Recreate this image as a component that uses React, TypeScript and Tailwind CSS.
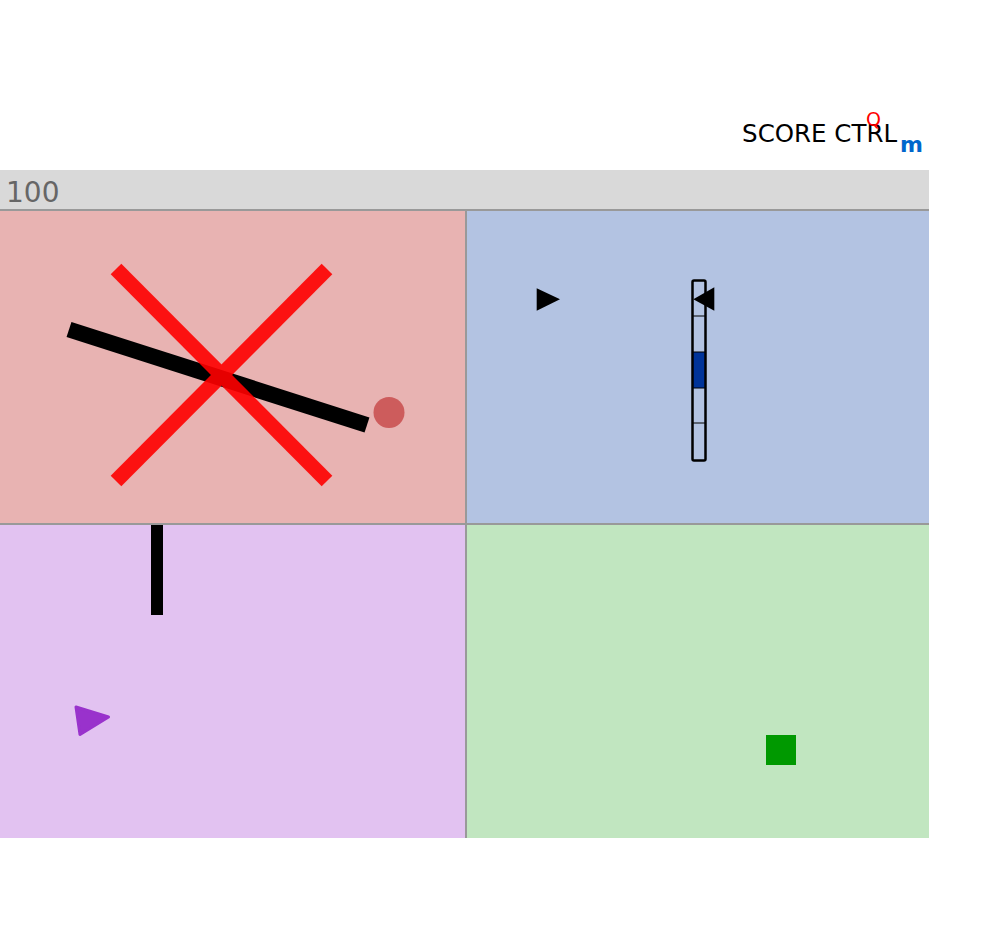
import React from 'react'

const FONT = { fontFamily: '"DejaVu Sans", Verdana, sans-serif' }

// ─── Quadrant canvases ───────────────────────────────────────────
function CrossPanel() {
  return (
    <div className="relative bg-[#e8b3b2] overflow-hidden">
      <svg className="absolute inset-0" width="465" height="312" viewBox="0 0 465 312">
        <line x1="69" y1="118.5" x2="367" y2="214" stroke="#000" strokeWidth="16" />
        <g opacity="0.9">
          <line x1="116" y1="58" x2="327" y2="270" stroke="#ff0000" strokeWidth="15" />
          <line x1="327" y1="58" x2="116" y2="270" stroke="#ff0000" strokeWidth="15" />
        </g>
        <circle cx="389" cy="201.5" r="15.5" fill="#cd5c5c" />
      </svg>
    </div>
  )
}

function SliderPanel() {
  const ticks = [105, 141, 177, 212]
  return (
    <div className="relative bg-[#b3c3e2] overflow-hidden">
      <svg className="absolute inset-0" width="462" height="312" viewBox="0 0 462 312">
        <polygon points="69.7,77.3 93,88.3 69.7,99.7" fill="#000" />
        <rect x="226" y="141" width="12" height="36" fill="#003399" />
        {ticks.map(y => (
          <line key={y} x1="226" y1={y} x2="238" y2={y} stroke="#000" strokeWidth="1" />
        ))}
        <rect x="225.5" y="69.5" width="13" height="180" rx="1.5" fill="none" stroke="#000" strokeWidth="2.5" />
        <polygon points="226.3,88.3 247.3,76.3 247.3,99.7" fill="#000" />
      </svg>
    </div>
  )
}

function ArrowPanel() {
  return (
    <div className="relative bg-[#e2c2f1] overflow-hidden">
      <svg className="absolute inset-0" width="465" height="313" viewBox="0 0 465 313">
        <rect x="151" y="0" width="12" height="90" fill="#000" />
        <polygon
          points="76,182 108.5,192 80,209.5"
          fill="#9932cc"
          stroke="#9932cc"
          strokeWidth="3"
          strokeLinejoin="round"
        />
      </svg>
    </div>
  )
}

function BoxPanel() {
  return (
    <div className="relative bg-[#c1e6c0] overflow-hidden">
      <svg className="absolute inset-0" width="462" height="313" viewBox="0 0 462 313">
        <rect x="299" y="210" width="30" height="30" fill="#009900" />
      </svg>
    </div>
  )
}

export default function App() {
  return (
    <div className="w-[929px] bg-white" style={FONT}>
      {/* Header */}
      <div className="h-[170px] flex justify-end items-baseline pt-[122px] pr-[6px]">
        <span className="relative text-[24.5px] leading-none text-black">
          SCORE CTRL
          <span className="absolute left-[124px] top-[-12px] text-[19px] leading-none text-[#ff0000]">Q</span>
        </span>
        <span className="relative top-[10px] ml-[3px] text-[22px] leading-none font-bold text-[#0066cc]">m</span>
      </div>

      {/* Score bar */}
      <div className="h-[41px] bg-[#d9d9d9] border-b-2 border-[#999999] pl-[6px] pt-[9px]">
        <span className="text-[28px] leading-none text-[#666666]">100</span>
      </div>

      {/* Board */}
      <div className="grid grid-cols-[465px_462px] grid-rows-[312px_313px] gap-[2px] bg-[#999999]">
        <CrossPanel />
        <SliderPanel />
        <ArrowPanel />
        <BoxPanel />
      </div>
    </div>
  )
}
